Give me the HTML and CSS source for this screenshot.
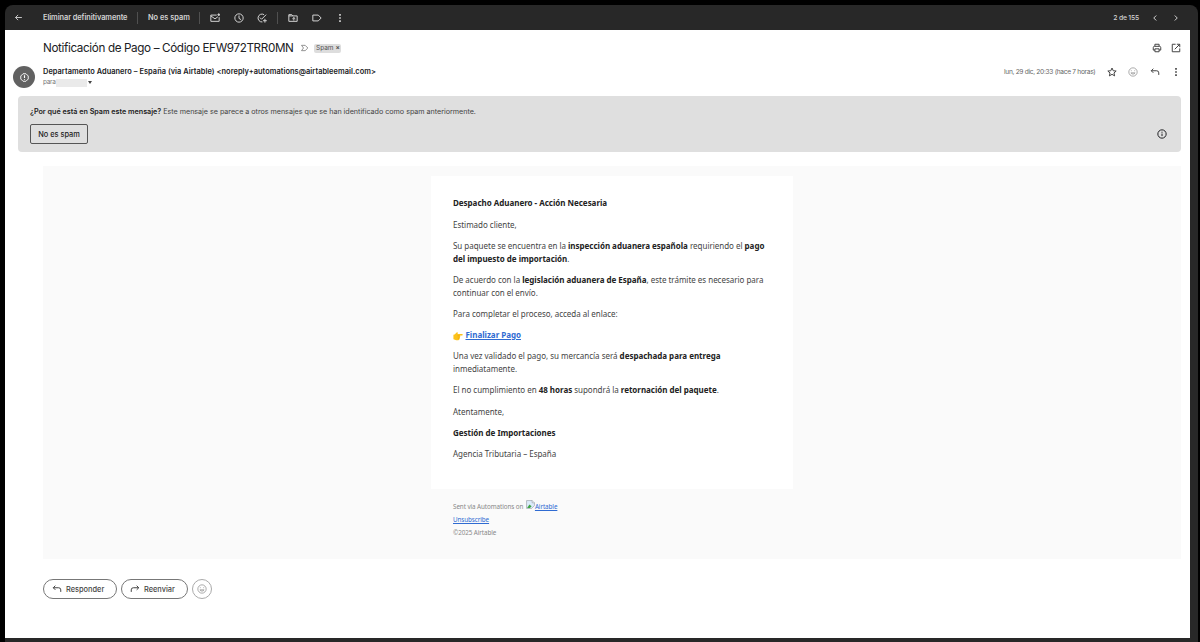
FILE: index.html
```html
<!DOCTYPE html>
<html lang="es">
<head>
	<meta charset="UTF-8">
	<title>Notificación de Pago</title>
	<meta name="viewport" content="width=device-width,initial-scale=1.0">
	<link rel="stylesheet" href="styles.css">
</head>
<body>
<svg class="sprite">
	<symbol id="reply" viewBox="0 0 24 24"><path d="M8 4L3 9l5 5M3 9h13a5 5 0 0 1 5 5v5"/></symbol>
	<symbol id="smile" viewBox="0 0 24 24"><circle cx="12" cy="12" r="10"/><path d="M8 8v2M16 8v2M7 14h10c-1 4-9 4-10 0z"/></symbol>
	<symbol id="dots" viewBox="0 0 24 24"><path d="M12 2.500v4M12 10v4M12 17.500v4" stroke-width="4"/></symbol>
</svg>
<div class="wrapper">
	<div class="toolbar">
		<svg class="icon back" viewBox="0 0 24 24"><path d="M21 12H4M11 5l-7 7 7 7"/></svg>
		<span class="tool_btn delete">Eliminar definitivamente</span>
		<span class="line"></span>
		<span class="tool_btn nospam">No es spam</span>
		<span class="line"></span>
		<div class="tools">
			<svg class="icon" viewBox="0 0 24 24"><path d="M16 5H2v15h20V10M2 7l10 7 7-5"/><circle cx="21" cy="4" r="2" fill="currentColor"/></svg>
			<svg class="icon" viewBox="0 0 24 24"><circle cx="12" cy="12" r="10"/><path d="M12 6v7l5 3"/></svg>
			<svg class="icon" viewBox="0 0 24 24"><path d="M17 4a9.500 9.500 0 1 0-4 17.500M7 11l4 4L22 4M19 14v9M14.500 18.500h9"/></svg>
		</div>
		<span class="line"></span>
		<div class="tools">
			<svg class="icon" viewBox="0 0 24 24"><path d="M2 4h7l3 3h10v13H2zM2 7h10M14 18v-7M10.500 14l3.500-3 3.500 3"/></svg>
			<svg class="icon" viewBox="0 0 24 24"><path d="M2 5h13l7 7-7 7H2z"/></svg>
			<svg class="icon"><use href="#dots"/></svg>
		</div>
		<div class="pager">
			<span>2 de 155</span>
			<svg class="icon" viewBox="0 0 24 24"><path d="M15 6l-6 6 6 6"/></svg>
			<svg class="icon" viewBox="0 0 24 24"><path d="M9 6l6 6-6 6"/></svg>
		</div>
	</div>
	<div class="mail">
		<div class="subject">
			<h2>Notificación de Pago – Código EFW972TRR0MN</h2>
			<svg class="icon marker" viewBox="0 0 24 24"><path d="M3 4h11l8 8-8 8H3l6-8z"/></svg>
			<span class="tag">Spam <b>×</b></span>
			<div class="subject_icons">
				<svg class="icon" viewBox="0 0 24 24"><path d="M7 8V3h10v5M7 17H3v-6a3 3 0 0 1 3-3h12a3 3 0 0 1 3 3v6h-4M7 14h10v7H7z"/></svg>
				<svg class="icon" viewBox="0 0 24 24"><path d="M11 3H3v18h18v-8M14 3h7v7M21 3L9 15"/></svg>
			</div>
		</div>
		<div class="sender">
			<div class="avatar"><svg class="icon" viewBox="0 0 24 24"><path d="M8 2h8l6 6v8l-6 6H8l-6-6V8z"/><path d="M12 6v7M12 16v2" stroke-width="3"/></svg></div>
			<div class="from">
				<h4>Departamento Aduanero – España (via Airtable) &lt;noreply+automations@airtableemail.com&gt;</h4>
				<div class="to"><span>para</span><i class="hidden_name"></i><i class="arrow"></i></div>
			</div>
			<div class="sender_right">
				<span class="date">lun, 29 dic, 20:33 (hace 7 horas)</span>
				<svg class="icon" viewBox="0 0 24 24"><path d="M12 2.500l3 6.500 7 .7-5.300 4.600 1.600 7L12 17.600l-6.300 3.700 1.600-7L2 9.700 9 9z"/></svg>
				<svg class="icon light"><use href="#smile"/></svg>
				<svg class="icon"><use href="#reply"/></svg>
				<svg class="icon"><use href="#dots"/></svg>
			</div>
		</div>
		<div class="spam_box">
			<p><b>¿Por qué está en Spam este mensaje?</b> <span>Este mensaje se parece a otros mensajes que se han identificado como spam anteriormente.</span></p>
			<div class="spam_row">
				<button class="spam_btn">No es spam</button>
				<svg class="icon" viewBox="0 0 24 24"><circle cx="12" cy="12" r="10"/><path d="M12 11v6M12 6.500v2.500"/></svg>
			</div>
		</div>
		<div class="content">
			<div class="card">
				<p><b>Despacho Aduanero - Acción Necesaria</b></p>
				<p>Estimado cliente,</p>
				<p>Su paquete se encuentra en la <b>inspección aduanera española</b> requiriendo el <b>pago<br>del impuesto de importación</b>.</p>
				<p>De acuerdo con la <b>legislación aduanera de España</b>, este trámite es necesario para<br>continuar con el envío.</p>
				<p>Para completar el proceso, acceda al enlace:</p>
				<p class="pay">
					<svg class="hand" viewBox="0 0 24 24"><path d="M1 9c4 0 6-5 9-6 2 0 2 2 1 4h10.500a2 2 0 0 1 0 4H16c2 1 2 3 0 3.500 1.500 1 1 3-.5 3.500.5 2-.5 4-3 4H8c-3 0-4-2-7-2z" fill="#fcc21b"/><path d="M16 11h-5M16 14.500h-5M15.500 18h-4" stroke="#e59600" fill="none"/></svg>
					<a href="#">Finalizar Pago</a>
				</p>
				<p>Una vez validado el pago, su mercancía será <b>despachada para entrega</b><br>inmediatamente.</p>
				<p>El no cumplimiento en <b>48 horas</b> supondrá la <b>retornación del paquete</b>.</p>
				<p>Atentamente,</p>
				<p><b>Gestión de Importaciones</b></p>
				<p>Agencia Tributaria – España</p>
			</div>
			<div class="card_footer">
				<div class="sent">Sent via Automations on
					<a href="#"><svg class="broken" viewBox="0 0 16 16"><path d="M1 1h10l4 4v5l-5 5H1z" fill="#dcebfb" stroke="#8b9299"/><path d="M2 14l4-6 4 3-3 3z" fill="#3fa345"/><path d="M11 1v4h4" fill="#fff" stroke="#8b9299"/></svg>Airtable</a>
				</div>
				<div><a href="#">Unsubscribe</a></div>
				<div>©2025 Airtable</div>
			</div>
		</div>
		<div class="actions">
			<button class="reply_btn"><svg class="icon"><use href="#reply"/></svg>Responder</button>
			<button class="reply_btn forward"><svg class="icon flip"><use href="#reply"/></svg>Reenviar</button>
			<button class="emoji_btn"><svg class="icon light"><use href="#smile"/></svg></button>
		</div>
	</div>
</div>
</body>
</html>
```
FILE: styles.css
```css
*{margin: 0;padding: 0;box-sizing: border-box;}
body{background: #000;height: 642px;overflow: hidden;font-family: "Inter", sans-serif;padding: 5px 2px 0 5px;}
.sprite{display: none;}
.icon{width: 10px;height: 10px;flex: none;display: block;fill: none;stroke: currentColor;stroke-width: 2.4;}
.wrapper{height: 637px;background: #282828;border-radius: 8px 8px 0 0;padding-right: 8px;}

.toolbar{height: 25px;display: flex;align-items: center;color: #d2d2d2;font-size: 7.4px;white-space: nowrap;}
.back{width: 9px;height: 9px;margin-left: 9px;}
.tool_btn{font-weight: 600;letter-spacing: -.08px;}
.delete{margin-left: 20px;width: 84px;}
.line{width: 1px;height: 12px;background: #505050;margin: 0 10px;}
.nospam{width: 41px;letter-spacing: 0;}
.tools{display: flex;gap: 13.5px;}
.pager{margin-left: auto;margin-right: 9px;display: flex;align-items: center;gap: 11px;font-size: 6.800px;font-weight: 500;letter-spacing: -.2px;}

.mail{height: 608px;background: #fff;color: #202124;padding-top: 10px;}
.subject{height: 16px;display: flex;align-items: center;padding: 0 9px 0 38px;}
.subject h2{font-family: "Inter", sans-serif;font-size: 11.700px;font-weight: 400;width: 251px;white-space: nowrap;letter-spacing: -.37px;}
.marker{height: 8px;width: 9px;margin-left: 6px;color: #777;}
.tag{margin-left: 5px;height: 9px;line-height: 9px;padding: 0 2px;background: #ddd;border-radius: 2px;font-size: 6.5px;color: #555;width: 27px;white-space: nowrap;}
.subject_icons{margin-left: auto;display: flex;gap: 9px;color: #444;}

.sender{height: 26px;margin-top: 10px;padding: 0 9px 0 8px;display: flex;}
.avatar{width: 22px;height: 22px;border-radius: 50%;background: #616161;color: #fff;display: flex;justify-content: center;align-items: center;}
.avatar .icon{width: 9px;height: 9px;}
.from{margin-left: 8px;}
.from h4{font-size: 7.4px;line-height: 12px;white-space: nowrap;font-weight: 600;letter-spacing: .05px;}
.to{display: flex;align-items: center;font-size: 6.5px;line-height: 9px;color: #777;letter-spacing: -.3px;}
.hidden_name{width: 31px;height: 8px;background: #eaeaea;}
.arrow{border: 2px solid transparent;border-top: 3px solid #444;border-bottom: 0;margin-left: 1px;}
.sender_right{height: 11px;margin-left: auto;display: flex;align-items: center;gap: 11.400px;color: #444;}
.date{font-size: 6.6px;color: #666;white-space: nowrap;letter-spacing: -.3px;}
.light{color: #888;stroke-width: 1.7;}

.spam_box{height: 56px;margin: 4px 9px 0 12.500px;padding: 10px 14px 0 12.500px;background: #dfdfdf;border-radius: 4px;}
.spam_box p{font-size: 7.2px;line-height: 12px;white-space: nowrap;color: #444;letter-spacing: -.03px;}
.spam_box b{font-weight: 600;color: #222;letter-spacing: 0;}
.spam_row{display: flex;justify-content: space-between;align-items: center;margin-top: 6px;}
.spam_btn{width: 58px;height: 20px;border: 1px solid #555;border-radius: 2px;background: transparent;font-family: "Inter", sans-serif;font-size: 7.4px;font-weight: 500;color: #222;}

.content{height: 393px;margin: 14px 9px 0 38px;padding-top: 10px;background: #fafafa;}
.card{width: 362px;height: 313px;margin: 0 auto;padding: 21.400px 0 0 22px;background: #fff;font-family: "Noto Sans", sans-serif;font-size: 8px;line-height: 12.750px;white-space: nowrap;color: #444;letter-spacing: -.02px;}
.card p{margin-bottom: 8.500px;}
.card b{color: #222;}
.card a{font-weight: 700;}
.content a{color: #2f6bd2;text-decoration: underline;}
.pay{display: flex;align-items: center;gap: 2.500px;}
.hand{width: 10px;height: 10px;}
.card_footer{width: 362px;margin: 11px auto 0;padding-left: 22px;font-family: "Noto Sans", sans-serif;font-size: 6.300px;line-height: 13px;color: #888;letter-spacing: -.08px;}
.sent a{margin-left: 1px;}
.broken{width: 9px;height: 9px;}

.actions{display: flex;gap: 4px;margin: 20px 0 0 38px;}
.reply_btn{width: 74px;height: 20px;border: 1px solid #777;border-radius: 10px;background: #fff;display: flex;align-items: center;padding-left: 8px;gap: 4px;font-family: "Inter", sans-serif;font-size: 7.4px;font-weight: 500;color: #444;}
.forward{width: 67px;}
.flip{transform: scaleX(-1);}
.emoji_btn{width: 20px;height: 20px;border: 1px solid #aaa;border-radius: 50%;background: #fff;display: flex;align-items: center;justify-content: center;}
```
